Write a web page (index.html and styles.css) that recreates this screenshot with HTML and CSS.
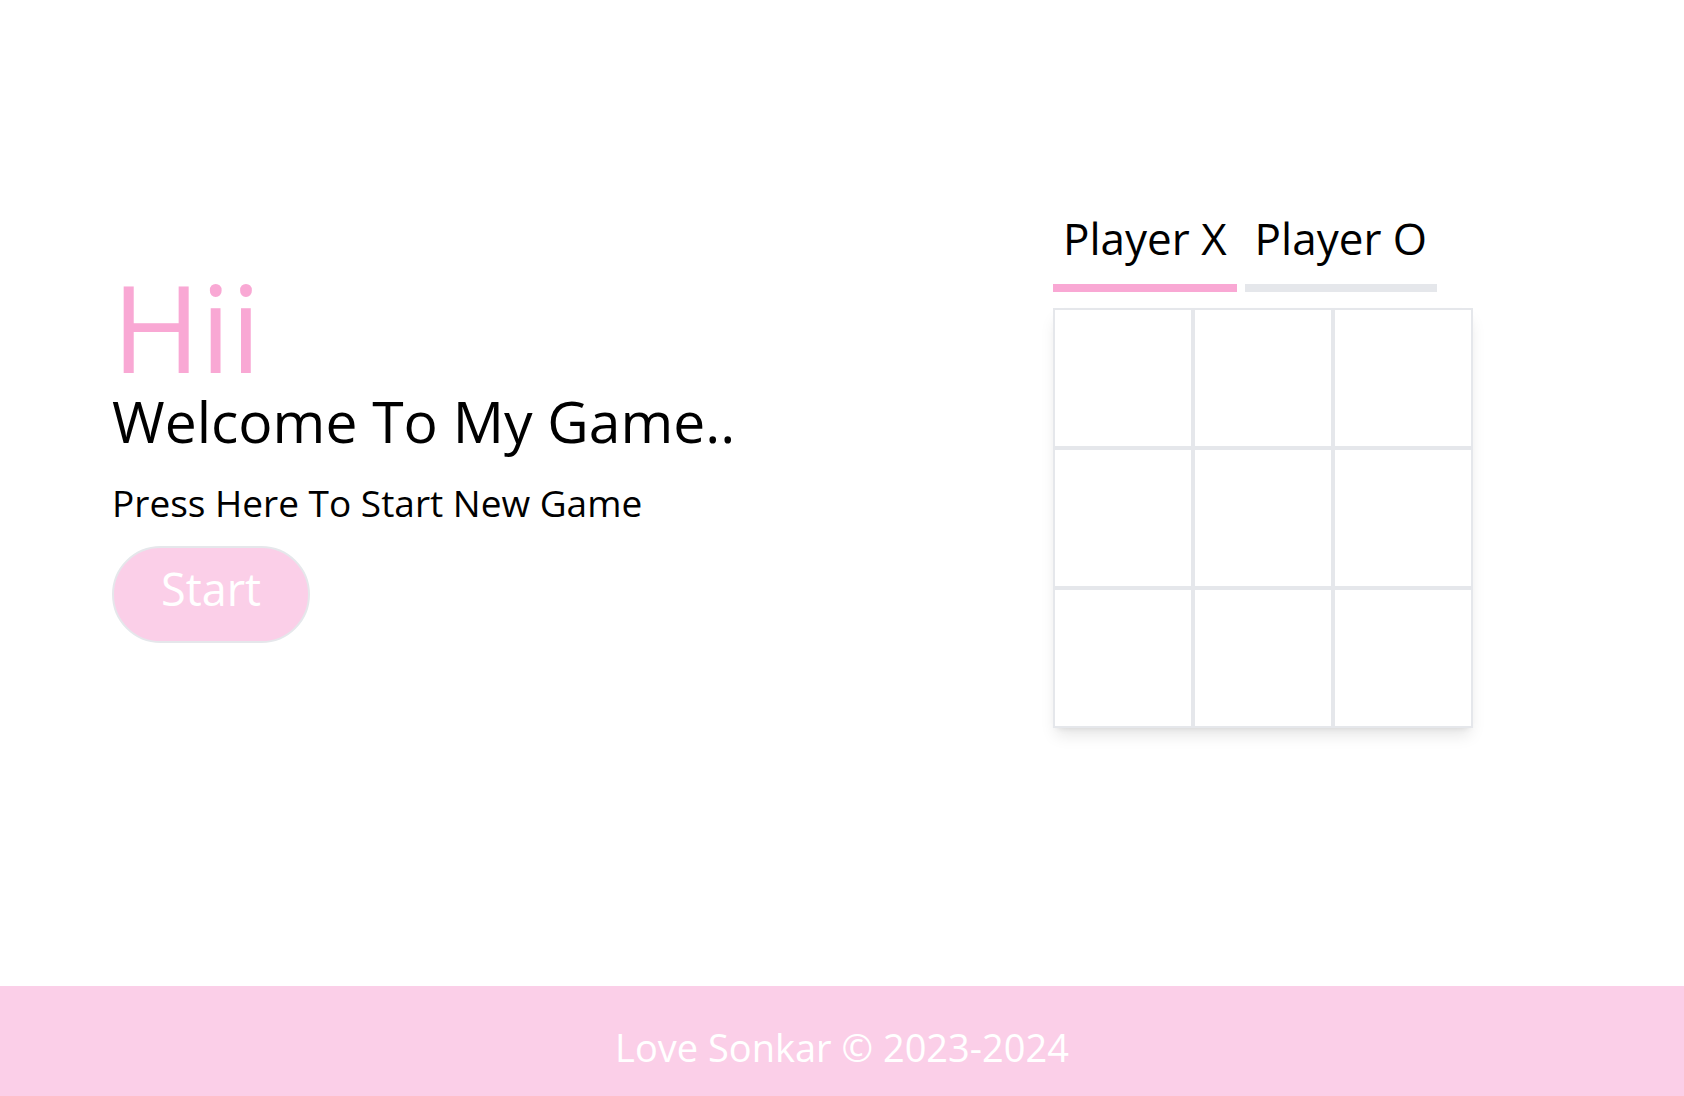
FILE: index.html
```html
<!DOCTYPE html>
<html lang="en">
<head>
<meta charset="utf-8">
<title>Tic Tac Toe</title>
<link rel="stylesheet" href="styles.css">
</head>
<body>
<main class="main">
  <section class="intro">
    <h1 class="hii">Hii</h1>
    <h2 class="welcome">Welcome To My Game..</h2>
    <p class="press">Press Here To Start New Game</p>
    <button class="start">Start</button>
  </section>
  <section class="game">
    <div class="game-inner">
      <div class="tabs">
        <div class="tab tab-active">Player X</div>
        <div class="tab">Player O</div>
      </div>
      <div class="board">
        <div class="cell"></div><div class="cell"></div><div class="cell"></div>
        <div class="cell"></div><div class="cell"></div><div class="cell"></div>
        <div class="cell"></div><div class="cell"></div><div class="cell"></div>
      </div>
    </div>
  </section>
</main>
<footer class="footer">Love Sonkar © 2023-2024</footer>
</body>
</html>
```
FILE: styles.css
```css
* { box-sizing: border-box; }
html, body { margin: 0; padding: 0; }
body {
  font-family: "Open Sans", "Noto Sans", sans-serif;
  color: #000;
  background: #fff;
}
.main {
  height: 986px;
  display: flex;
}
.intro {
  width: 842px;
  display: flex;
  flex-direction: column;
  align-items: flex-start;
  padding: 267px 0 0 112px;
}
.hii {
  margin: 0;
  font-weight: 400;
  font-size: 120px;
  line-height: 1;
  color: #f9a8d4;
}
.welcome {
  margin: 6px 0 0;
  font-weight: 400;
  font-size: 57px;
  line-height: 1;
}
.press {
  margin: 33px 0 0;
  font-size: 37px;
  line-height: 40px;
}
.start {
  margin-top: 23px;
  font-family: inherit;
  font-size: 45px;
  line-height: 45px;
  color: #fff;
  background: #fbcfe8;
  border: 2px solid #e5e7eb;
  border-radius: 9999px;
  padding: 18px 47px 30px;
}
.game {
  width: 842px;
  display: flex;
  justify-content: center;
  align-items: flex-start;
  padding-top: 216px;
}
.tabs {
  display: flex;
  gap: 8px;
  margin-bottom: 16px;
}
.tab {
  font-size: 44px;
  line-height: 44px;
  padding: 0 10px 24px;
  border-bottom: 8px solid #e5e7eb;
}
.tab-active { border-bottom-color: #f9a8d4; }
.board {
  display: grid;
  grid-template-columns: repeat(3, 140px);
  grid-template-rows: repeat(3, 140px);
  box-shadow: 0 10px 15px -3px rgba(0,0,0,0.1), 0 4px 6px -4px rgba(0,0,0,0.1);
}
.cell {
  border: 2px solid #e5e7eb;
  background: #fff;
}
.footer {
  height: 110px;
  background: #fbcfe8;
  color: #fff;
  display: flex;
  align-items: center;
  justify-content: center;
  font-size: 38px;
  padding-top: 12px;
}
```
